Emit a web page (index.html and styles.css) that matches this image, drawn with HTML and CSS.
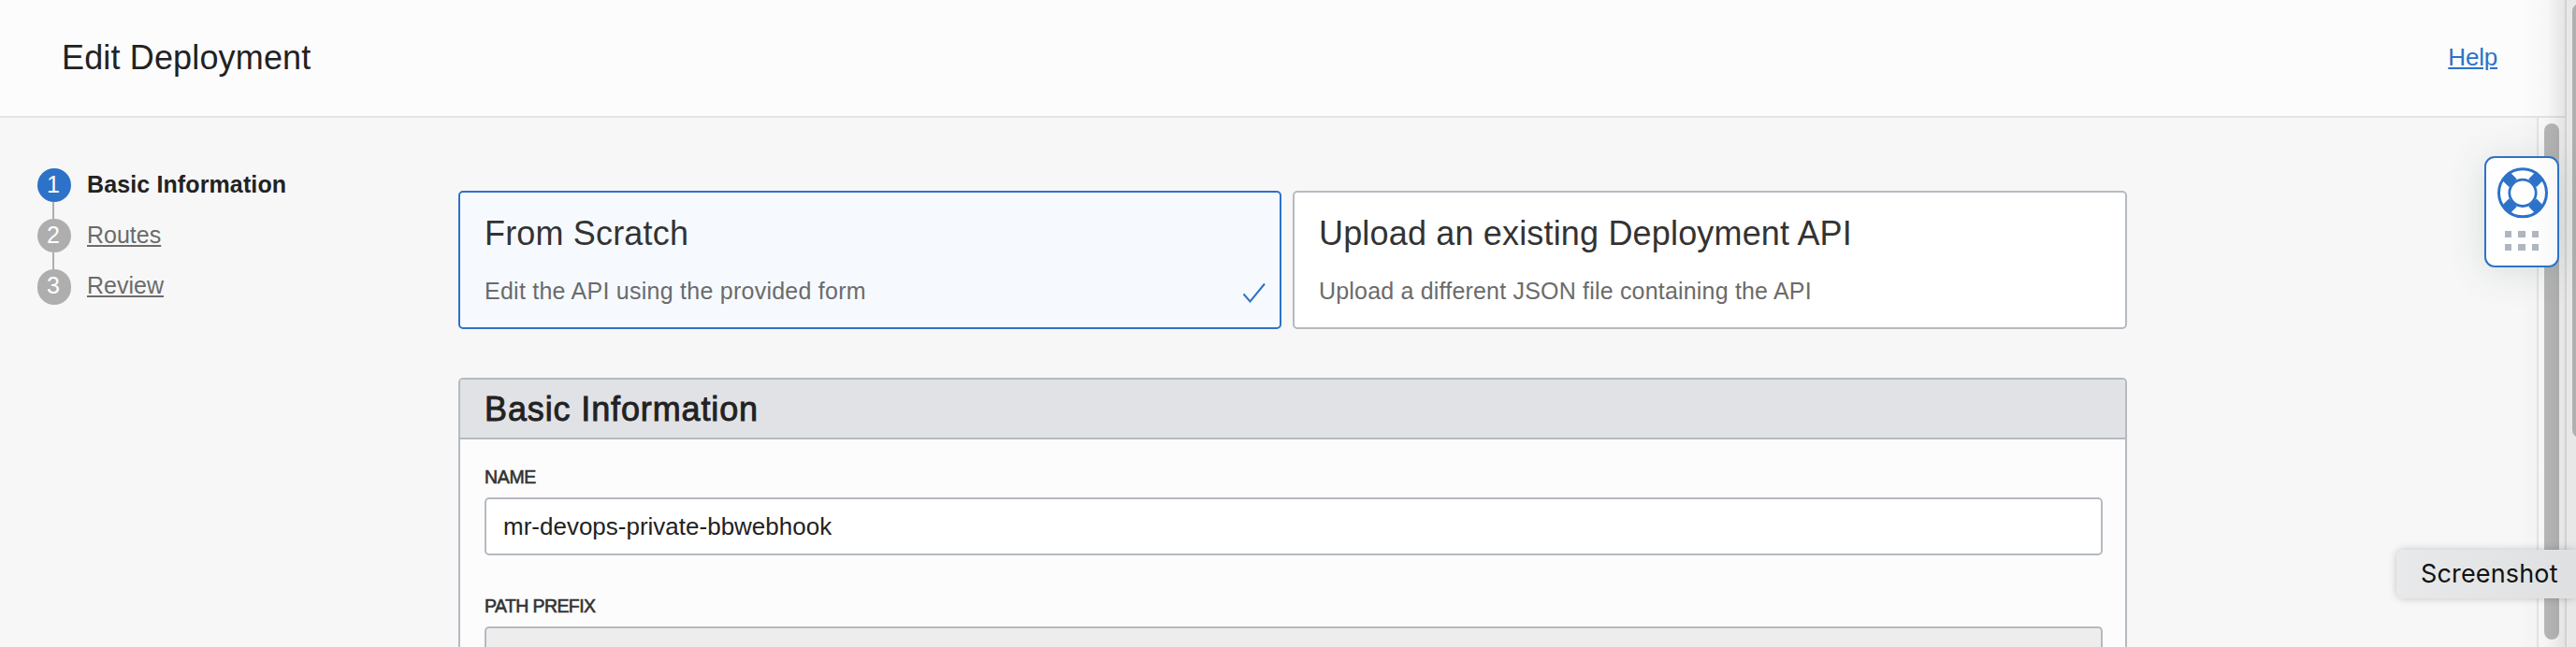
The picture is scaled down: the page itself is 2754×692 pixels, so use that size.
FILE: index.html
```
<!DOCTYPE html>
<html lang="en">
<head>
<meta charset="utf-8">
<title>Edit Deployment</title>
<link rel="stylesheet" href="styles.css">
</head>
<body>
<div class="shell">
  <div class="app">
    <header class="topbar">
      <h1 class="title">Edit Deployment</h1>
      <a class="help" href="#">Help</a>
    </header>
    <div class="body">
      <nav class="steps">
        <div class="step step-active"><span class="dot">1</span><span class="step-label step1">Basic Information</span></div>
        <div class="link"></div>
        <div class="step"><span class="dot">2</span><a class="step-label" href="#">Routes</a></div>
        <div class="link"></div>
        <div class="step step-last"><span class="dot">3</span><a class="step-label" href="#">Review</a></div>
      </nav>
      <main class="content">
        <div class="cards">
          <section class="card card-selected">
            <h2 class="card-title">From Scratch</h2>
            <p class="card-text">Edit the API using the provided form</p>
            <svg class="check" width="26" height="24" viewBox="0 0 26 24"><path d="M1.500 12.500 8.500 20.500 24 1.500" fill="none" stroke="#2d72c9" stroke-width="2"/></svg>
          </section>
          <section class="card card-plain">
            <h2 class="card-title">Upload an existing Deployment API</h2>
            <p class="card-text card-text-upload">Upload a different JSON file containing the API</p>
          </section>
        </div>
        <section class="panel">
          <h2 class="panel-title">Basic Information</h2>
          <div class="fields">
            <div class="label">NAME</div>
            <div class="input">mr-devops-private-bbwebhook</div>
            <div class="label label-path">PATH PREFIX</div>
            <div class="input input-off"></div>
          </div>
        </section>
      </main>
      <div class="track"><div class="thumb"></div></div>
    </div>
    <div class="edge-shade"></div>
  </div>
  <div class="outer"><div class="outer-thumb"></div></div>
</div>
<div class="support">
  <svg width="80" height="119" viewBox="0 0 80 119">
    <g transform="translate(41 39.300)" fill="none" stroke="#2d72c9">
      <circle r="25.500" stroke-width="3"/>
      <circle r="14.200" stroke-width="2.800"/>
      <path stroke-width="12" d="M10.500 10.500 17.700 17.700M-10.500 10.500-17.700 17.700M10.500-10.500 17.700-17.700M-10.500-10.500-17.700-17.700"/>
    </g>
    <path d="M22 80h7v7h-7zM36 80h8v7h-8zM51 80h7v7h-7zM22 94h7v7h-7zM36 94h8v7h-8zM51 94h7v7h-7z" fill="#b0b6be"/>
  </svg>
</div>
<div class="tooltip">Screenshot</div>
</body>
</html>
```

FILE: styles.css
```
* { box-sizing: border-box; }
body { margin: 0; width: 2754px; height: 692px; overflow: hidden; background: #f7f7f7; font-family: "Liberation Sans", Arial, sans-serif; color: #222; }
h1, h2, p { margin: 0; font-weight: 400; }
.shell { display: flex; height: 692px; overflow: hidden; }
.app { position: relative; width: 2742px; height: 692px; }
.topbar { display: flex; justify-content: space-between; align-items: flex-start; height: 126px; padding: 41px 72px 0 66px; background: #fcfcfc; border-bottom: 2px solid #e4e4e4; }
.title { font-size: 36px; line-height: 42px; letter-spacing: .15px; }
.help { margin-top: 5px; font-size: 26px; line-height: 30px; letter-spacing: -.2px; color: #2d72c9; text-underline-offset: 2px; text-decoration-thickness: 2px; }
.body { display: flex; height: 566px; }
.steps { width: 490px; padding: 54px 0 0 40px; flex: none; }
.step { display: flex; align-items: center; height: 36px; color: #6b6b6b; font-size: 25px; }
.step-last { height: 38px; }
.dot { width: 36px; height: 100%; border-radius: 18px; background: #aeaeae; color: #fff; line-height: 34px; text-align: center; padding-right: 2px; }
.step-active .dot { background: #2d72c9; }
.step-label { margin: -2px 0 0 17px; line-height: 36px; color: inherit; text-underline-offset: 2px; text-decoration-thickness: 2px; }
.step-last .step-label { margin-top: -4px; }
.step1 { font-weight: 700; color: #222; letter-spacing: .12px; }
.link { width: 2px; height: 18px; margin-left: 16px; background: #aeaeae; }
.content { width: 1784px; padding-top: 78px; flex: none; }
.cards { display: flex; gap: 12px; height: 148px; }
.card { position: relative; padding: 23px 26px; border: 2px solid #b5bac0; border-radius: 5px; background: #fff; }
.card-selected { width: 880px; border-color: #2d72c9; background: #f6faff; }
.card-plain { width: 892px; }
.card-title { font-size: 36px; line-height: 42px; letter-spacing: .17px; color: #333; white-space: nowrap; }
.card-text { margin-top: 25px; font-size: 25px; line-height: 30px; letter-spacing: .25px; color: #6b6b6b; white-space: nowrap; }
.card-text-upload { letter-spacing: .19px; }
.check { position: absolute; right: 14px; bottom: 24px; }
.panel { margin-top: 52px; height: 288px; border: 2px solid #b5bac0; border-bottom: 0; border-radius: 5px 5px 0 0; background: #fcfcfc; overflow: hidden; }
.panel-title { height: 64px; padding: 11px 26px; background: #e1e2e6; border-bottom: 2px solid #b5bac0; font-size: 36px; line-height: 42px; letter-spacing: .87px; -webkit-text-stroke: 0.9px #222; }
.fields { padding: 28px 24px 0 26px; }
.label { font-size: 19.5px; line-height: 24px; height: 34px; color: #333; letter-spacing: -.35px; -webkit-text-stroke: 0.6px #333; }
.label-path { margin-top: 42px; letter-spacing: -.6px; }
.input { height: 62px; border: 2px solid #b5bac0; border-radius: 5px; background: #fff; padding-left: 18px; font-size: 26px; line-height: 59px; }
.input-off { height: 22px; border-bottom: 0; border-radius: 5px 5px 0 0; background: #ededed; }
.track { width: 30px; margin-left: auto; padding: 6px 6px 0; border-left: 2px solid #e4e4e4; background: #fafafa; }
.thumb { width: 16px; height: 552px; border-radius: 8px; background: #b9b9b9; }
.edge-shade { position: absolute; top: 0; right: 0; width: 50px; height: 692px; background: linear-gradient(to right, rgba(0,0,0,0), rgba(0,0,0,.02) 60%, rgba(0,0,0,.09)); }
.outer { width: 12px; background: #e8e8e8; border-left: 2px solid #d2d2d2; padding: 4px 0 0 6px; overflow: hidden; }
.outer-thumb { width: 16px; height: 464px; border-radius: 8px; background: #b0b0b0; }
.support { position: absolute; left: 2656px; top: 167px; width: 80px; height: 119px; border: 2px solid #2d72c9; border-radius: 11px; background: linear-gradient(to right, #fff 60%, #f8f8f8); box-shadow: 0 4px 40px rgba(60,80,80,.16); }
.support svg { display: block; margin: -2px; }
.tooltip { position: absolute; left: 2562px; top: 588px; width: 192px; height: 52px; padding-left: 26px; border-radius: 8px 0 0 8px; background: linear-gradient(to right, #e8e9ea, #dfe0e2); box-shadow: 0 0 8px rgba(0,0,0,.22); font-family: Inter, sans-serif; font-size: 27px; line-height: 52px; letter-spacing: .15px; color: #111; }
```
